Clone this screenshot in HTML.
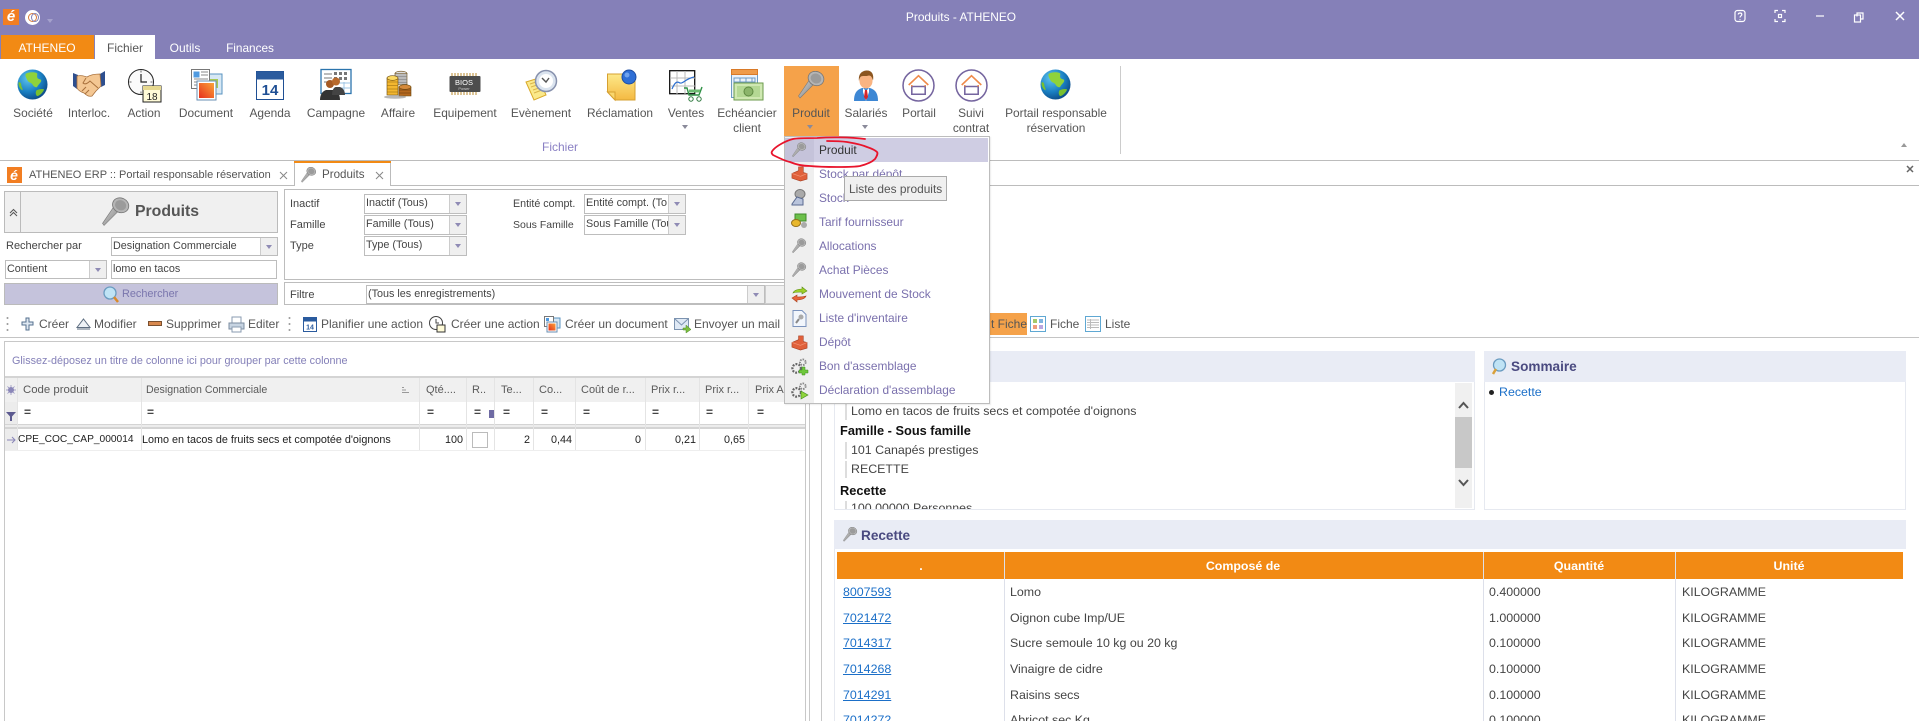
<!DOCTYPE html>
<html lang="fr"><head><meta charset="utf-8"><title>Produits - ATHENEO</title>
<style>
html,body{margin:0;padding:0;width:1919px;height:721px;overflow:hidden;background:#fff}
body{position:relative;font-family:"Liberation Sans",sans-serif;font-size:12px;color:#444}
.a{position:absolute}
.t{position:absolute;white-space:nowrap;line-height:16px;height:16px}
.c{transform:translateX(-50%)}
.r{transform:translateX(-100%)}
.lab{font-size:11.9px;color:#555}
.combo{position:absolute;background:#fff;border:1px solid #bdbdbd;box-sizing:border-box;height:20px;overflow:hidden;line-height:17px;font-size:10.8px;color:#444;white-space:nowrap;padding-left:1px}
.combo i{position:absolute;right:0;top:0;bottom:0;width:16px;background:#efefef;border-left:1px solid #ccc}
.combo i:after{content:"";position:absolute;left:5px;top:7px;border:3px solid transparent;border-top:4px solid #8f8bb5}
.tri{position:absolute;border:3.5px solid transparent;border-top:4px solid #8a8a9a}
.m{position:absolute;left:819px;font-size:11.9px;color:#7a70ad;white-space:nowrap;line-height:16px}
.tb{font-size:12px;color:#555}
.hd{font-size:11px;color:#5a5a5a}
.fl{font-size:11px;color:#444}
.eq{font-size:12px;color:#444;font-weight:bold}
.dt{font-size:10.8px;color:#222}
.lk{color:#1b6fc8;text-decoration:underline;font-size:12.4px}
.cl{font-size:12.4px;color:#444}
svg{position:absolute;overflow:visible}
</style></head><body>

<svg width="0" height="0" style="left:0;top:0">
<defs>
<radialGradient id="gl" cx="35%" cy="30%" r="75%"><stop offset="0" stop-color="#5fc4ee"/><stop offset=".6" stop-color="#1a7fc2"/><stop offset="1" stop-color="#0d4a86"/></radialGradient>
<linearGradient id="kg" x1="0" y1="0" x2="1" y2="1"><stop offset="0" stop-color="#d8d8d8"/><stop offset="1" stop-color="#7d7d7d"/></linearGradient>
<linearGradient id="nt" x1="0" y1="0" x2="0" y2="1"><stop offset="0" stop-color="#fde98a"/><stop offset="1" stop-color="#f4b942"/></linearGradient>
<linearGradient id="rd" x1="0" y1="1" x2="1" y2="0"><stop offset="0" stop-color="#e6301c"/><stop offset="1" stop-color="#fba33a"/></linearGradient>
<symbol id="globe" viewBox="0 0 32 32"><circle cx="16" cy="16" r="15.5" fill="url(#gl)"/><path d="M9 5c3-2 8-2 11-1 2 1 0 3 1 5s4 1 4 3-3 4-4 6-4 0-5-2-4-2-5-4-3-5-2-7z" fill="#8fd23a"/><path d="M20 22c2-1 6-2 8-1-1 3-4 6-7 7-2-1-2-4-1-6z" fill="#79c02e"/><path d="M1.500 14c2-1 3 1 3 3s2 3 1 5c-3-2-4-5-4-8z" fill="#79c02e"/></symbol>
<symbol id="key" viewBox="0 0 28 28"><path d="M2 27 L0.500 25 L12 8 L17 12 Z" fill="url(#kg)" stroke="#7a7a7a" stroke-width=".6"/><ellipse cx="18" cy="7.500" rx="8" ry="7" fill="#b5b5b5" stroke="#777" stroke-width=".8" transform="rotate(25 18 7.500)"/><ellipse cx="18" cy="7.500" rx="5.500" ry="4.800" fill="#9b9b9b" transform="rotate(25 18 7.500)"/></symbol>
<symbol id="house" viewBox="0 0 32 32"><circle cx="16" cy="16" r="15" fill="#fff" stroke="#75659f" stroke-width="1.500"/><path d="M6.500 15.500 16 6.500l9.500 9M9.500 13.500" fill="none" stroke="#ef8a4a" stroke-width="1.600"/><path d="M9.500 17v7.500h13V17z" fill="none" stroke="#75659f" stroke-width="1.500"/><path d="M9.500 15.500V17M22.500 15.500V17" stroke="#ef8a4a" stroke-width="1.500"/></symbol>
<symbol id="gear" viewBox="0 0 18 18"><circle cx="6" cy="11" r="4.500" fill="none" stroke="#666" stroke-width="2.400" stroke-dasharray="2 1.300"/><circle cx="12.500" cy="4.500" r="3" fill="none" stroke="#888" stroke-width="2" stroke-dasharray="1.600 1.100"/></symbol>
<symbol id="depot" viewBox="0 0 18 18"><path d="M1 9l7-3v-4h5v6l4 1v6l-7 2-9-3z" fill="#e0603a" stroke="#a33c20" stroke-width=".6"/><path d="M1 9l9 3 7-3" fill="none" stroke="#f09070" stroke-width=".8"/></symbol>
</defs>
</svg>

<!-- Title bar -->
<div class="a" style="left:0;top:0;width:1919px;height:59px;background:#8580b8"></div>
<div class="a" style="left:3px;top:9px;width:16px;height:16px;background:#f27e22"></div>
<div class="t c" style="left:11px;top:9px;color:#fff;font-weight:bold;font-size:15px;font-style:italic">é</div>
<div class="a" style="left:25px;top:10px;width:15px;height:15px;border-radius:50%;background:#fff"></div>
<div class="a" style="left:28px;top:13px;width:7px;height:7px;border-radius:50%;border:1px solid #d97b3a"></div>
<div class="a" style="left:31px;top:13px;width:6px;height:7px;border-radius:50%;border:1px solid #7f7fb5"></div>
<div class="tri" style="left:47px;top:19px;border-top-color:#a5a1cc"></div>
<div class="t c" style="left:961px;top:9px;color:#fff;font-size:11.9px">Produits - ATHENEO</div>

<svg style="left:1730px;top:8px" width="180" height="18" fill="none" stroke="#fff" stroke-width="1.200">
<rect x="5" y="2.500" width="10" height="11" rx="2.500"/><path d="M8.200 6.500c.2-2 3.600-2 3.600 0 0 1.500-1.800 1.400-1.800 3M10 11.200v.9"/>
<path d="M45 5V2.500h3M52 2.500h3V5M55 11v2.500h-3M48 13.500h-3V11"/><rect x="48.500" y="6.500" width="3" height="3"/>
<path d="M86 12h8" transform="translate(0,-4)"/>
<path d="M127 8.500V5h6v6h-2.500" /><rect x="124.500" y="7" width="6" height="7"/>
<path d="M166 4l8 8M174 4l-8 8" stroke-width="1.500"/>
</svg>

<!-- Ribbon tabs -->
<div class="a" style="left:1px;top:35px;width:93px;height:24px;background:#f28a14"></div>
<div class="t c" style="left:47px;top:40px;color:#fff;font-size:12px">ATHENEO</div>
<div class="a" style="left:95px;top:35px;width:60px;height:25px;background:#fff"></div>
<div class="t c" style="left:125px;top:40px;color:#555;font-size:12px">Fichier</div>
<div class="t c" style="left:185px;top:40px;color:#fff;font-size:12px">Outils</div>
<div class="t c" style="left:250px;top:40px;color:#fff;font-size:11.8px">Finances</div>

<!-- Ribbon hover -->
<div class="a" style="left:784px;top:66px;width:55px;height:71px;background:#f5a24a"></div>

<!-- Ribbon icons -->
<svg style="left:17px;top:69px" width="31" height="31"><use href="#globe" width="31" height="31"/></svg>
<svg style="left:73px;top:70px" width="32" height="28" viewBox="0 0 32 28"><path d="M0 3l5 2-1 14-4-3z" fill="#2e4f8f"/><path d="M32 1l-5 3 1 13 4-2z" fill="#2e4f8f"/><path d="M4 6c4-1 7 0 10 1 3-2 8-3 13-3l1 12-5 5-4 5c-3 1-6-1-8-3-3-1-6-3-7-5z" fill="#f4c793" stroke="#a8703c" stroke-width=".8"/><path d="M13 8l-3 5c2 2 5 0 7-2l8 7M12 24l4-4M9 21l4-4" fill="none" stroke="#a8703c" stroke-width="1"/></svg>
<svg style="left:128px;top:69px" width="33" height="33" viewBox="0 0 33 33"><circle cx="13" cy="13" r="12.500" fill="#fafafa" stroke="#222" stroke-width="1"/><path d="M13 5v8h6" stroke="#222" stroke-width="1.200" fill="none"/><path d="M13 1.500v2M13 22.500v2M1.500 13h2M22.500 13h2" stroke="#666"/><rect x="15" y="17" width="18" height="16" fill="#fffbd8" stroke="#222"/><rect x="15" y="17" width="18" height="4" fill="#e6d890"/><text x="24" y="31" text-anchor="middle" font-size="10" font-family="Liberation Sans" fill="#222">18</text></svg>
<svg style="left:191px;top:69px" width="31" height="31" viewBox="0 0 31 31"><rect x="13" y="5" width="18" height="20" fill="#d7e8f5" stroke="#5a93c0"/><rect x="18" y="10" width="9" height="9" fill="#a7c957"/><rect x="0.500" y="0.500" width="18" height="19" fill="#fff" stroke="#777"/><rect x="2.500" y="2.500" width="6" height="6" fill="#4f9ae0"/><path d="M10 3h7M10 6h7M3 10h14M3 13h14M3 16h14" stroke="#888"/><rect x="6" y="12" width="19" height="19" fill="#fff" stroke="#6a8fb3"/><rect x="8" y="14" width="15" height="15" fill="url(#rd)"/></svg>
<svg style="left:256px;top:71px" width="28" height="29" viewBox="0 0 28 29"><rect x=".5" y=".5" width="27" height="28" fill="#fff" stroke="#1f4f94"/><rect x=".5" y=".5" width="27" height="8" fill="#2a5b9e"/><text x="14" y="24" text-anchor="middle" font-size="15" font-weight="bold" font-family="Liberation Sans" fill="#1f4f94">14</text></svg>
<svg style="left:320px;top:69px" width="32" height="31" viewBox="0 0 32 31"><rect x="1" y=".5" width="30" height="24" fill="#fff" stroke="#2b74ad" stroke-width="1.300"/><path d="M4 5h8M4 9h8M4 13h4" stroke="#777"/><path d="M14 3h3v3h-3zM19 3h3v3h-3zM24 3h3v3h-3zM14 8h3v3h-3zM19 8h3v3h-3zM24 8h3v3h-3z" fill="#777"/><path d="M19 14h11M19 19h11M24 13v10" stroke="#9cc4e4"/><circle cx="10" cy="15" r="4" fill="#a65a24"/><circle cx="16" cy="12.500" r="4" fill="#b96a2c"/><path d="M0 31c0-6 3-9 6-10h8c3 1 6 4 6 10z" fill="#333"/><path d="M12 26c0-5 2-8 4-8h4c3 1 5 4 5 8z" fill="#444"/></svg>
<svg style="left:383px;top:71px" width="30" height="28" viewBox="0 0 30 28"><g stroke="#6b4a10" stroke-width=".6"><ellipse cx="18" cy="2.500" rx="6" ry="2.300" fill="#ddd"/><path d="M12 2.500v11h12v-11z" fill="#bbb"/><path d="M12 5.500h12M12 8.500h12M12 11.500h12" stroke="#777"/><path d="M4 7h11v17H4z" fill="#f3b72f"/><ellipse cx="9.500" cy="7" rx="5.500" ry="2.300" fill="#fbd964"/><path d="M4 11h11M4 14.500h11M4 18h11M4 21h11" stroke="#8c6410"/><path d="M16 16h12v9H16z" fill="#b5691f"/><ellipse cx="22" cy="16" rx="6" ry="2.300" fill="#d58a3a"/><path d="M16 19h12M16 22h12" stroke="#62360a"/></g><ellipse cx="12" cy="26" rx="11" ry="1.800" fill="#888" opacity=".6"/></svg>
<svg style="left:449px;top:72px" width="32" height="24" viewBox="0 0 32 24"><path d="M3 1v3M6 1v3M9 1v3M12 1v3M15 1v3M18 1v3M21 1v3M24 1v3M27 1v3M3 20v3M6 20v3M9 20v3M12 20v3M15 20v3M18 20v3M21 20v3M24 20v3M27 20v3" stroke="#b98a2c"/><rect x=".5" y="4" width="31" height="16" rx="1" fill="#4d4d4d"/><text x="15" y="13" text-anchor="middle" font-size="7.500" font-family="Liberation Sans" fill="#fff">BIOS</text><text x="15" y="18" text-anchor="middle" font-size="4" font-family="Liberation Sans" fill="#ccc">Power</text></svg>
<svg style="left:525px;top:70px" width="32" height="31" viewBox="0 0 32 31"><path d="M1 12l13-4 7 17-12 5z" fill="#fbe98a" stroke="#d9aa2c"/><path d="M5 14l9-3M6 17l9-3M8 20l9-3M9 23l8-3" stroke="#d9b54c"/><circle cx="21" cy="11" r="10.500" fill="#dbe4ef" stroke="#8791ad" stroke-width="1.500"/><circle cx="21" cy="11" r="7" fill="#fff"/><path d="M17 8l4 4 3-4" fill="none" stroke="#555" stroke-width="1.400"/></svg>
<svg style="left:607px;top:69px" width="30" height="31" viewBox="0 0 30 31"><path d="M.5 5H28v26H8L.5 23z" fill="url(#nt)" stroke="#d6a031"/><path d="M.5 23H8v8z" fill="#f9d66c" stroke="#d6a031"/><circle cx="22" cy="8" r="7" fill="#2e6fd6" stroke="#1c4da3"/><circle cx="20" cy="6" r="2.500" fill="#6fa3ee"/></svg>
<svg style="left:669px;top:70px" width="34" height="32" viewBox="0 0 34 32"><rect x=".7" y=".7" width="25" height="23" fill="#fff" stroke="#111" stroke-width="1.300"/><path d="M1 8h25M1 16h25M8 1v23M16 1v23" stroke="#bbb"/><path d="M3 19c3-7 5-8 8-6 3 1 5-4 14-6" fill="none" stroke="#2d6fd0" stroke-width="1.200"/><path d="M15 18h3l2 7h10l3-8" fill="none" stroke="#2f9145" stroke-width="1.400"/><path d="M20 21h11" stroke="#6dbb72" stroke-width="3"/><circle cx="22" cy="29" r="2.200" fill="#fff" stroke="#2f7a3f"/><circle cx="30" cy="29" r="2.200" fill="#fff" stroke="#2f7a3f"/></svg>
<svg style="left:731px;top:69px" width="32" height="32" viewBox="0 0 32 32"><rect x=".5" y=".5" width="26" height="28" fill="#eaf2fb" stroke="#6d9ac4"/><rect x=".5" y=".5" width="26" height="5" fill="#ef9b4a" stroke="#d97a28"/><path d="M3 9h21v8H3zM3 13h21M9 9v8M15 9v8M21 9v8" fill="none" stroke="#6d9ac4"/><rect x="3" y="14" width="29" height="17" fill="#cfe8b2" stroke="#6b9a4c"/><rect x="6" y="17" width="23" height="11" fill="#b4d894"/><circle cx="17.500" cy="22.500" r="4.500" fill="#8bb56a" stroke="#5f8a42"/></svg>
<svg style="left:798px;top:71px" width="28" height="28"><use href="#key" width="28" height="28"/></svg>
<svg style="left:854px;top:70px" width="24" height="31" viewBox="0 0 24 31"><path d="M0 31c0-7 2-11 8-13h8c6 2 8 6 8 13z" fill="#3d87d4"/><path d="M9 18l3 3 3-3 0 4-3 9-3-9z" fill="#fff"/><path d="M11 20h2l1 7-2 3-2-3z" fill="#d6262a"/><ellipse cx="12" cy="11" rx="6.500" ry="7.500" fill="#f9b482"/><path d="M5 11C4 3 9 .5 13 .5c5 0 7 4 6 10-1-3-2-5-4-5-3 1-7 0-8 1-1 1-2 3-2 5z" fill="#8c5620"/></svg>
<svg style="left:902px;top:69px" width="33" height="33"><use href="#house" width="33" height="33"/></svg>
<svg style="left:955px;top:69px" width="33" height="33"><use href="#house" width="33" height="33"/></svg>
<svg style="left:1040px;top:69px" width="31" height="31"><use href="#globe" width="31" height="31"/></svg>

<!-- Ribbon labels -->
<div class="t c lab" style="left:33px;top:105px">Société</div>
<div class="t c lab" style="left:89px;top:105px">Interloc.</div>
<div class="t c lab" style="left:144px;top:105px">Action</div>
<div class="t c lab" style="left:206px;top:105px">Document</div>
<div class="t c lab" style="left:270px;top:105px">Agenda</div>
<div class="t c lab" style="left:336px;top:105px">Campagne</div>
<div class="t c lab" style="left:398px;top:105px">Affaire</div>
<div class="t c lab" style="left:465px;top:105px">Equipement</div>
<div class="t c lab" style="left:541px;top:105px">Evènement</div>
<div class="t c lab" style="left:620px;top:105px">Réclamation</div>
<div class="t c lab" style="left:686px;top:105px">Ventes</div>
<div class="t c lab" style="left:747px;top:105px">Echéancier</div>
<div class="t c lab" style="left:747px;top:120px">client</div>
<div class="t c lab" style="left:811px;top:105px">Produit</div>
<div class="t c lab" style="left:866px;top:105px">Salariés</div>
<div class="t c lab" style="left:919px;top:105px">Portail</div>
<div class="t c lab" style="left:971px;top:105px">Suivi</div>
<div class="t c lab" style="left:971px;top:120px">contrat</div>
<div class="t c lab" style="left:1056px;top:105px">Portail responsable</div>
<div class="t c lab" style="left:1056px;top:120px">réservation</div>
<div class="tri" style="left:682px;top:125px"></div>
<div class="tri" style="left:807px;top:125px"></div>
<div class="tri" style="left:862px;top:125px"></div>
<div class="t c" style="left:560px;top:139px;color:#8a80c4;font-size:12px">Fichier</div>
<div class="a" style="left:1120px;top:66px;width:1px;height:88px;background:#ccc"></div>
<div class="a" style="left:1901px;top:143px;border:3.500px solid transparent;border-bottom:4px solid #999;border-top:0"></div>
<div class="a" style="left:0;top:160px;width:1919px;height:1px;background:#bcbcbc"></div>

<!-- Doc tabs -->
<div class="a" style="left:7px;top:167px;width:15px;height:16px;background:#f27e22"></div>
<div class="t c" style="left:14px;top:167px;color:#fff;font-weight:bold;font-size:14px;font-style:italic">é</div>
<div class="t" style="left:29px;top:167px;font-size:11px;color:#555">ATHENEO ERP :: Portail responsable réservation</div>
<svg style="left:279px;top:171px" width="9" height="9" stroke="#888"><path d="M1 1l7 7M8 1l-7 7"/></svg>
<div class="a" style="left:294px;top:161px;width:97px;height:25px;background:#fff;border:1px solid #bbb;border-bottom:0;border-top:0;box-sizing:border-box"></div>
<div class="a" style="left:294px;top:161px;width:97px;height:2px;background:#f28a14"></div>
<svg style="left:301px;top:167px" width="16" height="16"><use href="#key" width="16" height="16"/></svg>
<div class="t" style="left:322px;top:167px;font-size:11.6px;color:#555">Produits</div>
<svg style="left:375px;top:171px" width="9" height="9" stroke="#888"><path d="M1 1l7 7M8 1l-7 7"/></svg>
<div class="a" style="left:0;top:185px;width:294px;height:1px;background:#bcbcbc"></div>
<div class="a" style="left:391px;top:185px;width:1528px;height:1px;background:#bcbcbc"></div>
<svg style="left:1906px;top:165px" width="8" height="8" stroke="#666" stroke-width="1.500"><path d="M1 1l6 6M7 1l-6 6"/></svg>

<!-- Left search panel -->
<div class="a" style="left:4px;top:191px;width:274px;height:42px;background:#f0f0f0;border:1px solid #bbb;box-sizing:border-box"></div>
<div class="a" style="left:20px;top:191px;width:1px;height:42px;background:#bbb"></div>
<svg style="left:9px;top:208px" width="9" height="9" fill="none" stroke="#555"><path d="M1 5l3.500-3.500L8 5M1 8l3.500-3.500L8 8"/></svg>
<svg style="left:102px;top:196px" width="29" height="32"><use href="#key" width="29" height="32"/></svg>
<div class="t" style="left:135px;top:204px;font-size:15.800px;font-weight:bold;color:#555">Produits</div>
<div class="t fl" style="left:6px;top:238px">Rechercher par</div>
<div class="combo" style="left:111px;top:237px;width:167px;height:19px">Designation Commerciale<i></i></div>
<div class="combo" style="left:5px;top:260px;width:102px;height:19px">Contient<i></i></div>
<div class="combo" style="left:111px;top:260px;width:166px;height:19px">lomo en tacos</div>
<div class="a" style="left:4px;top:283px;width:274px;height:22px;background:#c5c3dc;border:1px solid #bbb;box-sizing:border-box"></div>
<svg style="left:103px;top:286px" width="16" height="17" viewBox="0 0 16 17"><circle cx="7" cy="7" r="6" fill="#bfe3f5" stroke="#6a9bc0" stroke-width="1.300"/><path d="M11 11l4 5" stroke="#d98a2a" stroke-width="2.500"/></svg>
<div class="t" style="left:122px;top:286px;font-size:10.900px;color:#7a76ad">Rechercher</div>

<!-- Filter panel -->
<div class="a" style="left:284px;top:189px;width:510px;height:91px;border:1px solid #bdbdbd;box-sizing:border-box"></div>
<div class="t fl" style="left:290px;top:196px">Inactif</div>
<div class="combo" style="left:364px;top:194px;width:103px">Inactif (Tous)<i></i></div>
<div class="t fl" style="left:290px;top:217px">Famille</div>
<div class="combo" style="left:364px;top:215px;width:103px">Famille (Tous)<i></i></div>
<div class="t fl" style="left:290px;top:238px">Type</div>
<div class="combo" style="left:364px;top:236px;width:103px">Type (Tous)<i></i></div>
<div class="t" style="left:513px;top:196px;font-size:10.700px;color:#444">Entité compt.</div>
<div class="combo" style="left:584px;top:194px;width:102px">Entité compt. (To<i></i></div>
<div class="t" style="left:513px;top:217px;font-size:10.500px;color:#444">Sous Famille</div>
<div class="combo" style="left:584px;top:215px;width:102px">Sous Famille (Tou<i></i></div>
<div class="a" style="left:284px;top:282px;width:510px;height:23px;border:1px solid #bdbdbd;box-sizing:border-box"></div>
<div class="t fl" style="left:290px;top:287px">Filtre</div>
<div class="combo" style="left:366px;top:285px;width:399px;height:19px">(Tous les enregistrements)<i></i></div>
<div class="a" style="left:765px;top:285px;width:20px;height:19px;background:#efefef;border:1px solid #ccc;box-sizing:border-box"></div>

<!-- Toolbar -->
<svg style="left:6px;top:316px" width="3" height="16" fill="#999"><circle cx="1.500" cy="2" r="1"/><circle cx="1.500" cy="8" r="1"/><circle cx="1.500" cy="14" r="1"/></svg>
<svg style="left:21px;top:317px" width="13" height="14" viewBox="0 0 13 14"><path d="M5 1h3v4h4v3H8v5H5V8H1V5h4z" fill="#dfe8f2" stroke="#55708f"/></svg>
<div class="t tb" style="left:39px;top:316px">Créer</div>
<svg style="left:76px;top:318px" width="15" height="12" viewBox="0 0 15 12"><path d="M7.500 1L14 9.500H1z" fill="#eef2f7" stroke="#5d6d80"/><path d="M1 11h13" stroke="#5d6d80"/></svg>
<div class="t tb" style="left:94px;top:316px">Modifier</div>
<svg style="left:148px;top:321px" width="14" height="6"><rect x=".5" y=".5" width="13" height="4" fill="#d9894e" stroke="#7a5030"/></svg>
<div class="t tb" style="left:166px;top:316px">Supprimer</div>
<svg style="left:228px;top:316px" width="17" height="17" viewBox="0 0 17 17"><path d="M4 1h9v6H4z" fill="#fff" stroke="#8a9bb0"/><path d="M1 7h15v6H1z" fill="#c7d4e2" stroke="#7b8ca0"/><path d="M4 11h9v5H4z" fill="#fff" stroke="#8a9bb0"/></svg>
<div class="t tb" style="left:248px;top:316px">Editer</div>
<svg style="left:288px;top:316px" width="3" height="16" fill="#999"><circle cx="1.500" cy="2" r="1"/><circle cx="1.500" cy="8" r="1"/><circle cx="1.500" cy="14" r="1"/></svg>
<svg style="left:303px;top:317px" width="14" height="15" viewBox="0 0 14 15"><rect x=".5" y=".5" width="13" height="14" fill="#fff" stroke="#2a5b9e"/><rect x=".5" y=".5" width="13" height="4" fill="#2a5b9e"/><text x="7" y="12.500" text-anchor="middle" font-size="7" font-weight="bold" font-family="Liberation Sans" fill="#2a5b9e">14</text></svg>
<div class="t tb" style="left:321px;top:316px">Planifier une action</div>
<svg style="left:429px;top:316px" width="17" height="17" viewBox="0 0 17 17"><circle cx="7" cy="7" r="6.500" fill="#fff" stroke="#444"/><path d="M7 3v4h3" fill="none" stroke="#444"/><rect x="8" y="9" width="8" height="7" fill="#fffbd8" stroke="#333"/></svg>
<div class="t tb" style="left:451px;top:316px">Créer une action</div>
<svg style="left:544px;top:316px" width="16" height="17" viewBox="0 0 16 17"><rect x="7" y="2" width="9" height="10" fill="#d7e8f5" stroke="#5a93c0"/><rect x=".5" y=".5" width="9" height="10" fill="#fff" stroke="#777"/><rect x="2" y="2" width="3" height="3" fill="#4f9ae0"/><rect x="3" y="6" width="10" height="10" fill="#fff" stroke="#6a8fb3"/><rect x="4.500" y="7.500" width="7" height="7" fill="url(#rd)"/></svg>
<div class="t tb" style="left:565px;top:316px">Créer un document</div>
<svg style="left:674px;top:316px" width="17" height="17" viewBox="0 0 17 17"><rect x=".5" y="2.500" width="14" height="11" fill="#dfe9f5" stroke="#7c93b0"/><path d="M1 3l6.500 6L14 3" fill="none" stroke="#7c93b0"/><path d="M9 12h3V9l5 4.500-5 3.500v-3H9z" fill="#7cbf3f" stroke="#4e8a28" stroke-width=".5"/></svg>
<div class="t tb" style="left:694px;top:316px">Envoyer un mail</div>
<div class="a" style="left:985px;top:313px;width:42px;height:22px;background:#f5a24a"></div>
<div class="t tb" style="left:991px;top:316px;color:#555">t Fiche</div>
<svg style="left:1030px;top:316px" width="16" height="16" viewBox="0 0 16 16"><rect x=".5" y=".5" width="15" height="15" fill="#fff" stroke="#5fa8d3"/><rect x="3" y="3" width="4" height="4" fill="#a5c96a"/><rect x="9" y="3" width="4" height="4" fill="#7fb4e0"/><rect x="3" y="9" width="4" height="4" fill="#ef9c7c"/><rect x="9" y="9" width="4" height="4" fill="#b9a6e0"/></svg>
<div class="t tb" style="left:1050px;top:316px">Fiche</div>
<svg style="left:1085px;top:316px" width="16" height="16" viewBox="0 0 16 16"><rect x=".5" y=".5" width="15" height="15" fill="#fff" stroke="#5fa8d3"/><path d="M2 4h12M2 6.500h12M2 9h12M2 11.500h12M5.500 3v10" stroke="#bbb"/></svg>
<div class="t tb" style="left:1105px;top:316px">Liste</div>
<div class="a" style="left:0;top:337px;width:1919px;height:1px;background:#c4c4c4"></div>

<!-- Grid -->
<div class="a" style="left:4px;top:341px;width:802px;height:382px;border:1px solid #c8c8c8;box-sizing:border-box"></div>
<div class="a" style="left:809px;top:338px;width:1px;height:383px;background:#c8c8c8"></div>
<div class="a" style="left:821px;top:338px;width:1px;height:383px;background:#c8c8c8"></div>
<div class="t" style="left:12px;top:353px;font-size:10.800px;color:#8480b8">Glissez-déposez un titre de colonne ici pour grouper par cette colonne</div>
<div class="a" style="left:5px;top:376px;width:800px;height:26px;background:#f0f0f0;border-top:2px solid #d4d4d4;box-sizing:border-box"></div>
<div class="a" style="left:5px;top:402px;width:12px;height:27px;background:#ececec"></div>
<div class="a" style="left:5px;top:424px;width:800px;height:5px;background:#ececec;border-top:1px solid #d4d4d4;border-bottom:2px solid #d4d4d4;box-sizing:border-box"></div>
<div class="a" style="left:5px;top:429px;width:12px;height:21px;background:#ececec"></div>
<div class="a" style="left:5px;top:450px;width:800px;height:1px;background:#eee"></div>
<!-- col separators -->
<div class="a" style="left:17px;top:378px;width:1px;height:72px;background:#e4e4e4"></div>
<div class="a" style="left:141px;top:378px;width:1px;height:72px;background:#e4e4e4"></div>
<div class="a" style="left:419px;top:378px;width:1px;height:72px;background:#e4e4e4"></div>
<div class="a" style="left:466px;top:378px;width:1px;height:72px;background:#e4e4e4"></div>
<div class="a" style="left:494px;top:378px;width:1px;height:72px;background:#e4e4e4"></div>
<div class="a" style="left:533px;top:378px;width:1px;height:72px;background:#e4e4e4"></div>
<div class="a" style="left:575px;top:378px;width:1px;height:72px;background:#e4e4e4"></div>
<div class="a" style="left:645px;top:378px;width:1px;height:72px;background:#e4e4e4"></div>
<div class="a" style="left:699px;top:378px;width:1px;height:72px;background:#e4e4e4"></div>
<div class="a" style="left:748px;top:378px;width:1px;height:72px;background:#e4e4e4"></div>
<svg style="left:6px;top:385px" width="10" height="10" viewBox="0 0 10 10"><circle cx="5" cy="5" r="3" fill="#8a86b8"/><path d="M5 0v10M0 5h10M1.500 1.500l7 7M8.500 1.500l-7 7" stroke="#8a86b8" stroke-width=".7"/></svg>
<svg style="left:6px;top:412px" width="10" height="9"><path d="M0 0h10L6 4.500V9H4V4.500z" fill="#5c5a90"/></svg>
<div class="t hd" style="left:23px;top:382px;font-size:11.4px">Code produit</div>
<div class="t hd" style="left:146px;top:382px;font-size:10.6px">Designation Commerciale</div>
<svg style="left:401px;top:386px" width="8" height="8" stroke="#999"><path d="M1 1.500h2M1 4h4M1 6.500h7"/></svg>
<div class="t hd" style="left:426px;top:382px">Qté....</div>
<div class="t hd" style="left:472px;top:382px">R..</div>
<div class="t hd" style="left:501px;top:382px">Te...</div>
<div class="t hd" style="left:539px;top:382px">Co...</div>
<div class="t hd" style="left:581px;top:382px">Coût de r...</div>
<div class="t hd" style="left:651px;top:382px">Prix r...</div>
<div class="t hd" style="left:705px;top:382px">Prix r...</div>
<div class="t hd" style="left:755px;top:382px">Prix Ac</div>
<div class="t eq" style="left:24px;top:404px">=</div>
<div class="t eq" style="left:147px;top:404px">=</div>
<div class="t eq" style="left:427px;top:404px">=</div>
<div class="t eq" style="left:474px;top:404px">=</div>
<div class="a" style="left:489px;top:410px;width:5px;height:8px;background:#6e6aa3"></div>
<div class="t eq" style="left:503px;top:404px">=</div>
<div class="t eq" style="left:541px;top:404px">=</div>
<div class="t eq" style="left:583px;top:404px">=</div>
<div class="t eq" style="left:652px;top:404px">=</div>
<div class="t eq" style="left:706px;top:404px">=</div>
<div class="t eq" style="left:757px;top:404px">=</div>
<svg style="left:7px;top:436px" width="9" height="8" fill="none" stroke="#8a86b8"><path d="M0 4h8M5 1l3 3-3 3"/></svg>
<div class="t dt" style="left:18px;top:432px;font-size:10.2px">CPE_COC_CAP_000014</div>
<div class="t dt" style="left:142px;top:432px">Lomo en tacos de fruits secs et compotée d'oignons</div>
<div class="t dt r" style="left:463px;top:432px">100</div>
<div class="a" style="left:472px;top:432px;width:16px;height:16px;background:#fff;border:1px solid #bbb;box-sizing:border-box"></div>
<div class="t dt r" style="left:530px;top:432px">2</div>
<div class="t dt r" style="left:572px;top:432px">0,44</div>
<div class="t dt r" style="left:641px;top:432px">0</div>
<div class="t dt r" style="left:696px;top:432px">0,21</div>
<div class="t dt r" style="left:745px;top:432px">0,65</div>

<!-- Section 1 -->
<div class="a" style="left:834px;top:351px;width:641px;height:159px;border:1px solid #e6e9f0;border-top:0;box-sizing:border-box;overflow:hidden">
  <div class="a" style="left:10px;top:52px;width:2px;height:17px;background:#ddd"></div>
  <div class="a" style="left:10px;top:91px;width:2px;height:17px;background:#ddd"></div>
  <div class="a" style="left:10px;top:110px;width:2px;height:17px;background:#ddd"></div>
  <div class="a" style="left:10px;top:150px;width:2px;height:10px;background:#ddd"></div>
  <div class="t cl" style="left:16px;top:52px">Lomo en tacos de fruits secs et compotée d'oignons</div>
  <div class="t" style="left:5px;top:72px;font-size:12.8px;font-weight:bold;color:#111">Famille - Sous famille</div>
  <div class="t cl" style="left:16px;top:91px">101 Canapés prestiges</div>
  <div class="t cl" style="left:16px;top:110px">RECETTE</div>
  <div class="t" style="left:5px;top:132px;font-size:12.8px;font-weight:bold;color:#111">Recette</div>
  <div class="t cl" style="left:16px;top:149px">100.00000 Personnes</div>
</div>
<div class="a" style="left:834px;top:351px;width:641px;height:31px;background:#e9ecf5"></div>
<div class="a" style="left:1455px;top:383px;width:17px;height:125px;background:#f0f0f0"></div>
<div class="a" style="left:1455px;top:417px;width:17px;height:51px;background:#c8c8c8"></div>
<svg style="left:1457px;top:400px" width="13" height="90" fill="none" stroke="#555" stroke-width="2"><path d="M2 8l4.500-5L11 8M2 80l4.500 5L11 80"/></svg>

<!-- Sommaire -->
<div class="a" style="left:1484px;top:351px;width:422px;height:159px;border:1px solid #e6e9f0;box-sizing:border-box"></div>
<div class="a" style="left:1484px;top:351px;width:422px;height:31px;background:#e9ecf5"></div>
<svg style="left:1491px;top:358px" width="16" height="17" viewBox="0 0 16 17"><circle cx="8.500" cy="7" r="6" fill="#bfe3f5" stroke="#6a9bc0" stroke-width="1.300"/><path d="M5 11l-3 5" stroke="#d9a03a" stroke-width="2.500"/></svg>
<div class="t" style="left:1511px;top:359px;font-size:13.600px;font-weight:bold;color:#4a4a80">Sommaire</div>
<div class="a" style="left:1489px;top:390px;width:5px;height:5px;border-radius:50%;background:#222"></div>
<div class="t" style="left:1499px;top:384px;font-size:12.4px;color:#1b6fc8">Recette</div>

<!-- Recette -->
<div class="a" style="left:834px;top:520px;width:1072px;height:29px;background:#e9ecf5"></div>
<svg style="left:843px;top:527px" width="15" height="15"><use href="#key" width="15" height="15"/></svg>
<div class="t" style="left:861px;top:528px;font-size:13.600px;font-weight:bold;color:#4a4a80">Recette</div>
<div class="a" style="left:834px;top:549px;width:1px;height:172px;background:#e6e9f0"></div>
<div class="a" style="left:837px;top:552px;width:1066px;height:27px;background:#f28a14"></div>
<div class="a" style="left:1004px;top:552px;width:1px;height:169px;background:#dde0ea"></div>
<div class="a" style="left:1483px;top:552px;width:1px;height:169px;background:#dde0ea"></div>
<div class="a" style="left:1675px;top:552px;width:1px;height:169px;background:#dde0ea"></div>
<div class="a" style="left:837px;top:605px;width:1066px;height:26px;background:#fafafa;z-index:-1"></div>
<div class="a" style="left:837px;top:656px;width:1066px;height:26px;background:#fafafa;z-index:-1"></div>
<div class="a" style="left:837px;top:708px;width:1066px;height:13px;background:#fafafa;z-index:-1"></div>
<div class="t c" style="left:921px;top:558px;color:#fff;font-weight:bold;font-size:12.4px">.</div>
<div class="t c" style="left:1243px;top:558px;color:#fff;font-weight:bold;font-size:12.4px">Composé de</div>
<div class="t c" style="left:1579px;top:558px;color:#fff;font-weight:bold;font-size:12.4px">Quantité</div>
<div class="t c" style="left:1789px;top:558px;color:#fff;font-weight:bold;font-size:12.4px">Unité</div>

<div class="t lk" style="left:843px;top:584px">8007593</div><div class="t cl" style="left:1010px;top:584px">Lomo</div><div class="t cl" style="left:1489px;top:584px">0.400000</div><div class="t cl" style="left:1682px;top:584px">KILOGRAMME</div>
<div class="t lk" style="left:843px;top:610px">7021472</div><div class="t cl" style="left:1010px;top:610px">Oignon cube Imp/UE</div><div class="t cl" style="left:1489px;top:610px">1.000000</div><div class="t cl" style="left:1682px;top:610px">KILOGRAMME</div>
<div class="t lk" style="left:843px;top:635px">7014317</div><div class="t cl" style="left:1010px;top:635px">Sucre semoule 10 kg ou 20 kg</div><div class="t cl" style="left:1489px;top:635px">0.100000</div><div class="t cl" style="left:1682px;top:635px">KILOGRAMME</div>
<div class="t lk" style="left:843px;top:661px">7014268</div><div class="t cl" style="left:1010px;top:661px">Vinaigre de cidre</div><div class="t cl" style="left:1489px;top:661px">0.100000</div><div class="t cl" style="left:1682px;top:661px">KILOGRAMME</div>
<div class="t lk" style="left:843px;top:687px">7014291</div><div class="t cl" style="left:1010px;top:687px">Raisins secs</div><div class="t cl" style="left:1489px;top:687px">0.100000</div><div class="t cl" style="left:1682px;top:687px">KILOGRAMME</div>
<div class="t lk" style="left:843px;top:712px">7014272</div><div class="t cl" style="left:1010px;top:712px">Abricot sec Kg</div><div class="t cl" style="left:1489px;top:712px">0.100000</div><div class="t cl" style="left:1682px;top:712px">KILOGRAMME</div>

<!-- Dropdown menu -->
<div class="a" style="left:784px;top:136px;width:206px;height:268px;background:#fff;border:1px solid #bdbdbd;box-sizing:border-box;box-shadow:1px 1px 1px rgba(0,0,0,.08)"></div>
<div class="a" style="left:785px;top:137px;width:29px;height:266px;background:#efefef"></div>
<div class="a" style="left:785px;top:138px;width:203px;height:24px;background:#cfcde3"></div>
<div class="a" style="left:785px;top:138px;width:29px;height:24px;background:#c5c3da"></div>
<svg style="left:792px;top:142px" width="15" height="16"><use href="#key" width="15" height="16"/></svg>
<svg style="left:791px;top:165px" width="17" height="17"><use href="#depot" width="17" height="17"/></svg>
<svg style="left:791px;top:189px" width="17" height="17" viewBox="0 0 17 17"><ellipse cx="9" cy="5" rx="5" ry="4.500" fill="#aaa" stroke="#777"/><path d="M1 15l5-7 6 2v6H1z" fill="#b9c4dc" stroke="#5a6a90"/></svg>
<svg style="left:791px;top:213px" width="17" height="17" viewBox="0 0 17 17"><rect x="4" y="1" width="11" height="7" fill="#6cc04a" stroke="#3f8a2b"/><ellipse cx="5" cy="10" rx="4.500" ry="3.500" fill="#e8b72c" stroke="#96701a"/><circle cx="13" cy="12" r="3" fill="#aaa"/></svg>
<svg style="left:792px;top:238px" width="15" height="16"><use href="#key" width="15" height="16"/></svg>
<svg style="left:792px;top:262px" width="15" height="16"><use href="#key" width="15" height="16"/></svg>
<svg style="left:791px;top:286px" width="17" height="17" viewBox="0 0 17 17"><path d="M2 7c1-3 6-4 9-4V1l5 4-5 3V6C8 6 5 6 2 7z" fill="#9ed02a" stroke="#5c8f14" stroke-width=".6"/><path d="M15 10c-1 3-6 4-9 4v2l-5-4 5-3v2c3 0 6 0 9-1z" fill="#e8643a" stroke="#a83f1c" stroke-width=".6"/></svg>
<svg style="left:792px;top:310px" width="15" height="17" viewBox="0 0 15 17"><path d="M1 .5h9l4 4v12H1z" fill="#f2f6fc" stroke="#7b93bd"/><path d="M4 13l3-4" stroke="#888" stroke-width="2"/><circle cx="9" cy="7" r="2.500" fill="#aaa"/></svg>
<svg style="left:791px;top:334px" width="17" height="17"><use href="#depot" width="17" height="17"/></svg>
<svg style="left:791px;top:358px" width="17" height="17"><use href="#gear" width="17" height="17"/><path d="M11 9h3v3h3v3h-3v2h-3v-2H8v-3h3z" fill="#6fc83c" stroke="#3f8a1f" stroke-width=".5"/></svg>
<svg style="left:791px;top:382px" width="17" height="17"><use href="#gear" width="17" height="17"/><path d="M10 9l7 4-7 4z" fill="#8fd43c" stroke="#3f8a1f" stroke-width=".6"/></svg>
<div class="m" style="top:142px;color:#333">Produit</div>
<div class="m" style="top:166px">Stock par dépôt</div>
<div class="m" style="top:190px">Stock</div>
<div class="m" style="top:214px">Tarif fournisseur</div>
<div class="m" style="top:238px">Allocations</div>
<div class="m" style="top:262px">Achat Pièces</div>
<div class="m" style="top:286px">Mouvement de Stock</div>
<div class="m" style="top:310px">Liste d'inventaire</div>
<div class="m" style="top:334px">Dépôt</div>
<div class="m" style="top:358px">Bon d'assemblage</div>
<div class="m" style="top:382px">Déclaration d'assemblage</div>

<!-- Tooltip -->
<div class="a" style="left:844px;top:176px;width:103px;height:25px;background:#f0f0f0;border:1px solid #aaa;box-sizing:border-box"></div>
<div class="t" style="left:849px;top:181px;font-size:11.9px;color:#555">Liste des produits</div>

<!-- Red scribble -->
<svg style="left:0;top:0" width="1919" height="721"><path d="M865 139C850 137 830 137 817 138C805 138 797 138 793 139C785 141 777 146 774 149C771 152 771 153 773 155C777 157 785 161 790 162C797 165 805 166 810 166C820 167 830 167 837 167C847 167 855 167 860 166C868 164 873 161 875 159C877 156 878 153 877 152C875 150 870 148 867 147C860 144 853 143 847 142C840 141 832 141 827 141" fill="none" stroke="#e8142c" stroke-width="1.800" stroke-linecap="round"/></svg>

</body></html>
